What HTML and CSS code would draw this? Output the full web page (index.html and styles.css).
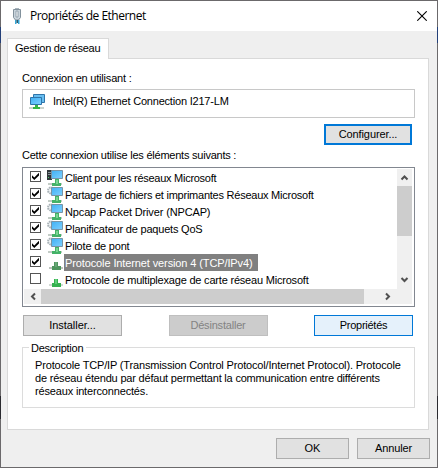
FILE: index.html
```
<!DOCTYPE html>
<html lang="fr">
<head>
<meta charset="utf-8">
<title>Propriétés de Ethernet</title>
<link rel="stylesheet" href="styles.css">
</head>
<body>
<svg width="0" height="0" class="defs">
  <defs>
    <linearGradient id="screen" x1="0" y1="0" x2="1" y2="1"><stop offset="0" stop-color="#3fb0f4"/><stop offset="1" stop-color="#7fd0ff"/></linearGradient>
    <symbol id="monitor" viewBox="0 0 17 17">
      <path d="M1 14h14v2H1z" fill="#c3ccc6"/>
      <path d="M4.500 1.500h11v8h-11z" fill="url(#screen)" stroke="#7894a6"/>
      <path d="M8 10h4v4h2v3H5v-3h3z" fill="#45b268"/>
      <path d="M9 11h2v4H9z" fill="#7ad592"/>
    </symbol>
    <symbol id="client" viewBox="0 0 17 17">
      <path d="M0 1h5v10H0z" fill="#30363a"/><path d="M1 3.500h3M1 5.500h3" stroke="#89949a"/><path d="M1 8.500h1" stroke="#4ed06a"/>
      <use href="#monitor" width="17" height="17"/>
    </symbol>
    <symbol id="service" viewBox="0 0 17 17">
      <circle cx="4" cy="4.500" r="3" fill="#eef1f2" stroke="#aab3b8" stroke-width="2" stroke-dasharray="1.600 .75"/>
      <use href="#monitor" width="17" height="17"/>
    </symbol>
    <symbol id="protocol" viewBox="0 0 17 17">
      <path d="M2 13h14v2H2z" fill="#d3dad5"/><path d="M7 8h4v4h3v4H5v-4h2z" fill="#36b150"/><path d="M8 8h2v5H8z" fill="#5fd078"/>
    </symbol>
    <symbol id="protocol-dim" viewBox="0 0 17 17">
      <path d="M2 13h14v2H2z" fill="#bcc3be"/><path d="M7 8h4v4h3v4H5v-4h2z" fill="#509660"/><path d="M8 8h2v5H8z" fill="#68a676"/>
    </symbol>
    <symbol id="tick" viewBox="0 0 9 9"><path d="M1 3.200v2.600L3.300 8 8 3.400V.8L3.300 5.400z" fill="#000"/></symbol>
  </defs>
</svg>
<main class="window">
  <header class="titlebar">
    <svg class="plug" width="10" height="17" viewBox="0 0 10 17"><path d="M3 0h4v3H3z" fill="#a8b4bc"/><path d="M1.500 1.500h7v8l-2 2.500h-3l-2-2.500z" fill="#c9d4dc" stroke="#82919c"/><path d="M4 3h2v6H4z" fill="#f3f7f9" stroke="#8796a1" stroke-width=".8"/><path d="M3 12h1.500v4H3zM6 12h1.500v4H6z" fill="#35a6d6"/><path d="M4.500 12H6v3H4.500z" fill="#31586b"/></svg>
    <h1 class="title">Propriétés de Ethernet</h1>
    <svg class="close" width="10" height="10" viewBox="0 0 10 10"><path d="M.3.3l9.400 9.400M9.700.3L.3 9.700" stroke="#000" stroke-width="1.100"/></svg>
  </header>
  <div class="tabs"><div class="tab">Gestion de réseau</div></div>
  <section class="panel">
    <div class="label">Connexion en utilisant :</div>
    <div class="adapter">
      <svg width="17" height="16" viewBox="0 0 17 16"><path d="M4.500.5h11v8h-11z" fill="#67bdf0" stroke="#2f75aa"/><path d="M1.500 3.500h11v7h-11z" fill="url(#screen)" stroke="#2f75aa"/><path d="M0 13h15v2H0z" fill="#ccd5ce"/><path d="M6 11h3v2h2v2H4v-2h2z" fill="#35b545"/></svg>
      <span>Intel(R) Ethernet Connection I217-LM</span>
    </div>
    <div class="configure-row"><button class="btn default">Configurer...</button></div>
    <div class="label uses">Cette connexion utilise les éléments suivants :</div>
    <div class="list">
      <div class="list-top">
        <ul class="items">
          <li class="tighter"><i class="check"><svg><use href="#tick"/></svg></i><svg class="ico"><use href="#client"/></svg><span>Client pour les réseaux Microsoft</span></li>
          <li class="tight"><i class="check"><svg><use href="#tick"/></svg></i><svg class="ico"><use href="#service"/></svg><span>Partage de fichiers et imprimantes Réseaux Microsoft</span></li>
          <li class="loose"><i class="check"><svg><use href="#tick"/></svg></i><svg class="ico"><use href="#service"/></svg><span>Npcap Packet Driver (NPCAP)</span></li>
          <li><i class="check"><svg><use href="#tick"/></svg></i><svg class="ico"><use href="#service"/></svg><span>Planificateur de paquets QoS</span></li>
          <li><i class="check"><svg><use href="#tick"/></svg></i><svg class="ico"><use href="#service"/></svg><span>Pilote de pont</span></li>
          <li class="selected"><i class="check"><svg><use href="#tick"/></svg></i><svg class="ico"><use href="#protocol-dim"/></svg><span>Protocole Internet version 4 (TCP/IPv4)</span></li>
          <li><i class="check"></i><svg class="ico"><use href="#protocol"/></svg><span>Protocole de multiplexage de carte réseau Microsoft</span></li>
        </ul>
        <div class="vscroll">
          <svg width="15" height="17" viewBox="0 0 15 17"><path d="M4.500 10.500l3-3 3 3" class="arrow"/></svg>
          <div class="vthumb"></div>
          <svg width="15" height="17" viewBox="0 0 15 17"><path d="M4.500 6l3 3 3-3" class="arrow"/></svg>
        </div>
      </div>
      <div class="hscroll">
        <svg width="17" height="15" viewBox="0 0 17 15"><path d="M11 4.500l-3 3 3 3" class="arrow"/></svg>
        <div class="hthumb"></div>
        <svg width="17" height="15" viewBox="0 0 17 15"><path d="M6 4.500l3 3-3 3" class="arrow"/></svg>
      </div>
    </div>
    <div class="actions">
      <button class="btn wide install">Installer...</button>
      <button class="btn wide" disabled>Désinstaller</button>
      <button class="btn wide hot">Propriétés</button>
    </div>
    <fieldset class="group">
      <legend>Description</legend>
      <p>Protocole TCP/IP (Transmission Control Protocol/Internet Protocol). Protocole<br><span class="second">de réseau étendu par défaut permettant la communication entre différents</span><br>réseaux interconnectés.</p>
    </fieldset>
  </section>
  <footer class="footer">
    <button class="btn ok">OK</button>
    <button class="btn">Annuler</button>
  </footer>
</main>
</body>
</html>
```
FILE: styles.css
```
* { box-sizing: border-box; }
body { margin: 0; padding: 1px; width: 438px; height: 468px; overflow: hidden; font: 11px/13px "Liberation Sans", sans-serif; letter-spacing: -.2px; color: #000; background: linear-gradient(#6b696b 27px, #233f78 27px 43px, #6b696b 43px 396px, #2a2a2f 396px 419px, #6b696b 419px); }
.defs { position: absolute; }
.window { width: 436px; height: 466px; background: #efefef; display: flex; flex-direction: column; }
.titlebar { height: 30px; background: #fff; display: flex; align-items: center; padding: 0 10px 0 11px; flex: none; }
.title { margin: 0 0 0 8px; font: 12px/16px "Open Sans", sans-serif; letter-spacing: -.5px; flex: 1; white-space: nowrap; }
.tabs { height: 27px; padding: 7px 0 0 6px; flex: none; }
.tab { position: relative; width: 102px; height: 21px; border: 1px solid #d9d9d9; border-bottom: 0; background: #fff; padding: 3px 0 0 7px; letter-spacing: -.27px; white-space: nowrap; z-index: 1; }
.panel { margin: 0 8px 0 6px; height: 372px; border: 1px solid #d9d9d9; background: #fff; padding: 12px 13px 0 14px; flex: none; white-space: nowrap; }
.label { height: 18px; padding-top: 1px; }
.adapter { height: 29px; border: 1px solid #c8c8c8; display: flex; align-items: flex-start; gap: 7px; padding: 4px 0 0 6px; }
.adapter span { padding-top: 1px; }
.configure-row { display: flex; justify-content: flex-end; margin: 6px 3px 0 0; }
.btn { width: 73px; height: 21px; border: 1px solid #adadad; background: #e1e1e1; color: #000; padding: 0; font: inherit; letter-spacing: -.1px; text-align: center; }
.btn.default { width: 88px; border: 2px solid #0078d7; }
.btn.wide { width: 99px; letter-spacing: -.2px; }
.btn.wide.install { letter-spacing: -.05px; }
.btn.ok { letter-spacing: 0; }
.btn.wide.hot { background: #e5f1fb; border-color: #0078d7; letter-spacing: -.27px; }
.btn:disabled { background: #ccc; border-color: #bfbfbf; color: #838383; }
.uses { height: 22px; padding-top: 4px; letter-spacing: -.23px; }
.list { height: 140px; border: 1px solid #828790; padding: 1px; }
.list-top { height: 120px; display: flex; }
.items { list-style: none; margin: 0; padding: 0; flex: 1; }
.items li { height: 17px; display: flex; align-items: center; }
.items li.tighter { letter-spacing: -.27px; }
.items li.tight { letter-spacing: -.24px; }
.items li.loose { letter-spacing: -.14px; }
.items span { height: 17px; line-height: 16px; padding: 1px 1px 0; }
.items li.selected { letter-spacing: -.115px; }
.selected span { background: #808080; color: #fff; padding-right: 6px; }
.check { width: 11px; height: 11px; border: 1px solid #555; margin: 0 6px 2px 6px; }
.check svg { display: block; width: 9px; height: 9px; }
.ico { width: 17px; height: 17px; }
.vscroll { width: 15px; margin-right: 1px; background: #f0f0f0; display: flex; flex-direction: column; }
.vscroll svg, .hscroll svg { flex: none; display: block; }
.vthumb { height: 50px; background: #cdcdcd; margin-bottom: auto; }
.hscroll { height: 15px; margin-right: 1px; background: #f0f0f0; display: flex; }
.hthumb { width: 323px; background: #cdcdcd; margin-right: 16px; }
.arrow { fill: none; stroke: #505050; stroke-width: 2; }
.actions { display: flex; justify-content: space-between; margin: 8px 2px 0 1px; }
.group { margin: 5px 0 0; height: 67px; border: 1px solid #dcdcdc; padding: 0 0 0 12px; letter-spacing: -.163px; }
.group legend { position: relative; top: 1px; padding: 0 3px 0 2px; margin-left: -6px; letter-spacing: -.25px; }
.group p { margin: 5px 0 0; }
.second { letter-spacing: -.194px; }
.footer { display: flex; gap: 8px; justify-content: flex-end; padding: 8px 7px 0 0; }
```
